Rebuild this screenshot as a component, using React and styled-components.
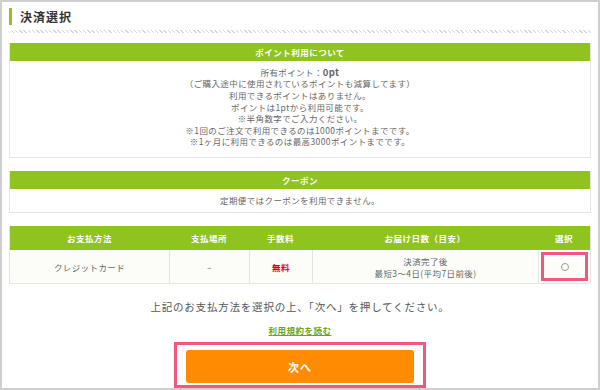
import React from "react";
import styled, { createGlobalStyle } from "styled-components";

const Global = createGlobalStyle`
  html, body { margin: 0; padding: 0; background: #fff; }
  body { font-family: "Noto Sans CJK JP", "Noto Sans", sans-serif; color: #666; }
`;

const GREEN = "#8fc31f";

const Frame = styled.div`
  box-sizing: border-box;
  width: 600px;
  height: 390px;
  border: 2px solid #cfcfcf;
  padding: 6px 7px 0;
  display: flex;
  flex-direction: column;
`;

const Title = styled.h2`
  margin: 0;
  height: 17px;
  border-left: 3px solid ${GREEN};
  padding-left: 8px;
  font-size: 12px;
  font-weight: bold;
  line-height: 17px;
  color: #333;
  letter-spacing: 1px;
`;

const Dots = styled.div`
  margin: 5px 0 10px;
  height: 3px;
  background-image: repeating-linear-gradient(45deg, #d6d6d6 0 1px, transparent 1px 3px);
`;

const Section = styled.section`
  border: 1px solid #e4e4e4;
  border-top: none;
  margin-bottom: ${(p) => p.$gap}px;
`;

const SectionHead = styled.div`
  background: ${GREEN};
  color: #fff;
  height: 18px;
  line-height: 18px;
  text-align: center;
  font-size: 8.5px;
  font-weight: bold;
  letter-spacing: 0.5px;
`;

const SectionBody = styled.div`
  text-align: center;
  font-size: 8.5px;
  line-height: ${(p) => p.$lh || 12}px;
  padding: ${(p) => p.$pad};
  color: #666;
  letter-spacing: 0.4px;
`;

const Strong = styled.span`
  font-weight: bold;
  font-size: 9.5px;
  color: #666;
`;

const Table = styled.div`
  display: grid;
  grid-template-columns: 159px 80px 63px 226px 1fr;
  border: 1px solid #e4e4e4;
  border-top: none;
`;

const Th = styled.div`
  background: ${GREEN};
  color: #fff;
  height: 24px;
  display: flex;
  align-items: center;
  justify-content: center;
  font-size: 8.5px;
  font-weight: bold;
  letter-spacing: 0.5px;
`;

const Td = styled.div`
  position: relative;
  background: #fcfdf8;
  height: 33px;
  display: flex;
  flex-direction: column;
  align-items: center;
  justify-content: center;
  font-size: 8.5px;
  line-height: 12px;
  color: ${(p) => (p.$red ? "#e60012" : "#666")};
  font-weight: ${(p) => (p.$red ? "bold" : "normal")};
  border-left: ${(p) => (p.$first ? "none" : "1px solid #e4e4e4")};
  letter-spacing: 0.4px;
`;

const Radio = styled.span`
  width: 8px;
  height: 8px;
  box-sizing: border-box;
  border: 1px solid #999;
  border-radius: 50%;
  background: #fff;
`;

const Highlight = styled.div`
  position: absolute;
  box-sizing: border-box;
  border: 3px solid #f0587f;
  left: ${(p) => p.$l}px;
  right: ${(p) => p.$r}px;
  top: ${(p) => p.$t}px;
  bottom: ${(p) => p.$b}px;
  pointer-events: none;
`;

const Note = styled.p`
  margin: 16px 0 0;
  text-align: center;
  font-size: 10.5px;
  letter-spacing: 0.8px;
  color: #555;
  line-height: 14px;
`;

const TermsLink = styled.a`
  display: block;
  margin: 10px auto 0;
  text-align: center;
  font-size: 8.5px;
  font-weight: bold;
  color: #6aa51a;
  text-decoration: underline;
  line-height: 12px;
  letter-spacing: 0.5px;
`;

const ButtonWrap = styled.div`
  position: relative;
  margin: 6px auto 0;
  width: 228px;
  padding: 8px 12px 5px;
`;

const NextButton = styled.button`
  display: block;
  width: 228px;
  height: 33px;
  border: none;
  border-radius: 3px;
  background: #ff8c00;
  color: #fff;
  font-family: "Noto Sans CJK JP", sans-serif;
  font-size: 11px;
  font-weight: bold;
  letter-spacing: 1px;
`;

export default function App() {
  const lines = [
    "（ご購入途中に使用されているポイントも減算してます）",
    "利用できるポイントはありません。",
    "ポイントは1ptから利用可能です。",
    "※半角数字でご入力ください。",
    "※1回のご注文で利用できるのは1000ポイントまでです。",
    "※1ヶ月に利用できるのは最高3000ポイントまでです。",
  ];
  return (
    <>
      <Global />
      <Frame>
        <Title>決済選択</Title>
        <Dots />
        <Section $gap={13}>
          <SectionHead>ポイント利用について</SectionHead>
          <SectionBody $lh={11.6} $pad="6px 0 9px">
            <div>
              所有ポイント：<Strong>0pt</Strong>
            </div>
            {lines.map((l) => (
              <div key={l}>{l}</div>
            ))}
          </SectionBody>
        </Section>
        <Section $gap={13}>
          <SectionHead>クーポン</SectionHead>
          <SectionBody $lh={12} $pad="5px 0 6px">
            定期便ではクーポンを利用できません。
          </SectionBody>
        </Section>
        <Table>
          <Th>お支払方法</Th>
          <Th>支払場所</Th>
          <Th>手数料</Th>
          <Th>お届け日数（目安）</Th>
          <Th>選択</Th>
          <Td $first>クレジットカード</Td>
          <Td>–</Td>
          <Td $red>無料</Td>
          <Td>
            <div>決済完了後</div>
            <div>最短3〜4日(平均7日前後)</div>
          </Td>
          <Td>
            <Radio />
            <Highlight $l={2} $r={2} $t={2} $b={2} />
          </Td>
        </Table>
        <Note>上記のお支払方法を選択の上、「次へ」を押してください。</Note>
        <TermsLink href="#">利用規約を読む</TermsLink>
        <ButtonWrap>
          <NextButton>次へ</NextButton>
          <Highlight $l={0} $r={0} $t={0} $b={0} />
        </ButtonWrap>
      </Frame>
    </>
  );
}
